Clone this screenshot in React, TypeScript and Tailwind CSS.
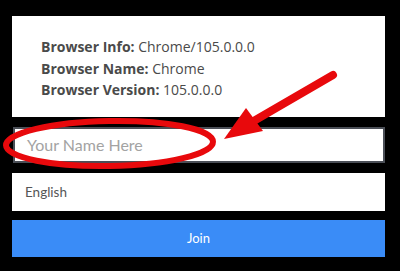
import React from "react";

export default function App() {
  return (
    <div className="relative w-[400px] h-[271px] bg-black overflow-hidden">
      <div className="flex flex-col w-[373px] ml-[12px] pt-[16px]">
        <div
          className="bg-white h-[101px] pl-[29px] pt-[20px] text-[14px] leading-[21.5px] text-[#4a4a4a]"
          style={{ fontFamily: '"Open Sans", sans-serif' }}
        >
          <div>
            <span className="font-bold">Browser Info:</span> Chrome/105.0.0.0
          </div>
          <div>
            <span className="font-bold">Browser Name:</span> Chrome
          </div>
          <div>
            <span className="font-bold">Browser Version:</span> 105.0.0.0
          </div>
        </div>
        <div className="mt-[10px] h-[36px] ml-[1px] border-2 border-[#4b4f57] bg-white flex items-center pl-[12px]">
          <span
            className="text-[16px] text-[#a3a3a3]"
            style={{ fontFamily: "Lato, sans-serif" }}
          >
            Your Name Here
          </span>
        </div>
        <div className="mt-[10px] h-[38px] bg-white flex items-center pl-[13px]">
          <span
            className="text-[13.5px] text-[#555]"
            style={{ fontFamily: "Lato, sans-serif" }}
          >
            English
          </span>
        </div>
        <div className="mt-[9px] h-[37px] bg-[#3a8cf7] flex items-center justify-center">
          <span
            className="text-[13px] text-white"
            style={{ fontFamily: "Lato, sans-serif" }}
          >
            Join
          </span>
        </div>
      </div>
      <svg
        className="absolute left-0 top-0"
        width="400"
        height="271"
        viewBox="0 0 400 271"
      >
        <ellipse
          cx="109.5"
          cy="143.5"
          rx="103.5"
          ry="22.5"
          fill="none"
          stroke="#e8090c"
          strokeWidth="6"
          transform="rotate(-1 109.5 143.5)"
        />
        <line
          x1="333"
          y1="75"
          x2="252"
          y2="122"
          stroke="#e8090c"
          strokeWidth="8"
          strokeLinecap="round"
        />
        <polygon points="224,139 246,108 263,131" fill="#e8090c" />
      </svg>
    </div>
  );
}
